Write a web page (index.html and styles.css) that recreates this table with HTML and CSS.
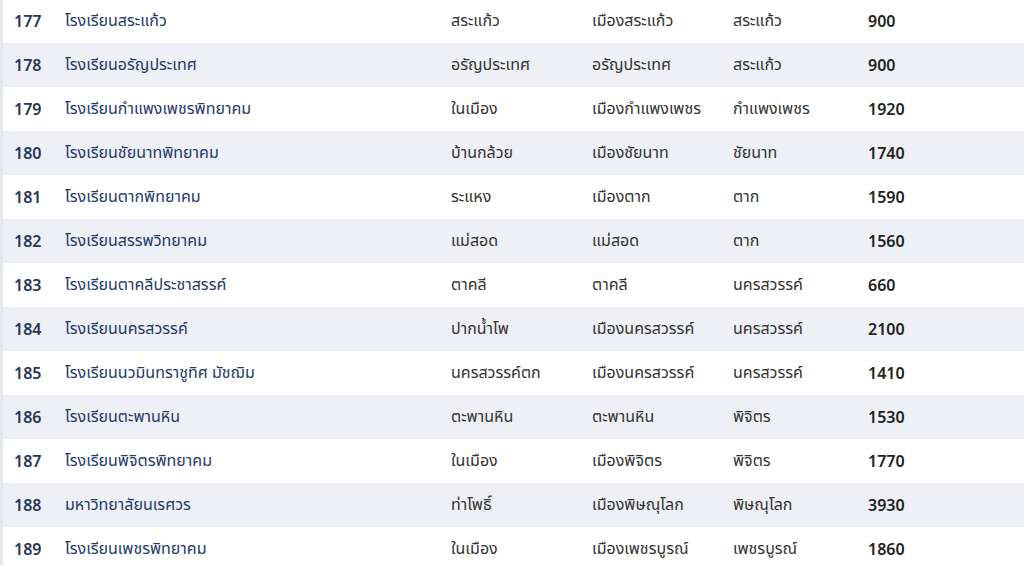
FILE: index.html
```html
<!DOCTYPE html>
<html lang="th">
<head>
<meta charset="utf-8">
<link rel="stylesheet" href="styles.css">
</head>
<body>
<div class="wrap">
<table class="schools">
<tbody>
<tr><td class="no">177</td><td class="name">โรงเรียนสระแก้ว</td><td class="c1">สระแก้ว</td><td class="c2">เมืองสระแก้ว</td><td class="c3">สระแก้ว</td><td class="val">900</td></tr>
<tr><td class="no">178</td><td class="name">โรงเรียนอรัญประเทศ</td><td class="c1">อรัญประเทศ</td><td class="c2">อรัญประเทศ</td><td class="c3">สระแก้ว</td><td class="val">900</td></tr>
<tr><td class="no">179</td><td class="name">โรงเรียนกำแพงเพชรพิทยาคม</td><td class="c1">ในเมือง</td><td class="c2">เมืองกำแพงเพชร</td><td class="c3">กำแพงเพชร</td><td class="val">1920</td></tr>
<tr><td class="no">180</td><td class="name">โรงเรียนชัยนาทพิทยาคม</td><td class="c1">บ้านกล้วย</td><td class="c2">เมืองชัยนาท</td><td class="c3">ชัยนาท</td><td class="val">1740</td></tr>
<tr><td class="no">181</td><td class="name">โรงเรียนตากพิทยาคม</td><td class="c1">ระแหง</td><td class="c2">เมืองตาก</td><td class="c3">ตาก</td><td class="val">1590</td></tr>
<tr><td class="no">182</td><td class="name">โรงเรียนสรรพวิทยาคม</td><td class="c1">แม่สอด</td><td class="c2">แม่สอด</td><td class="c3">ตาก</td><td class="val">1560</td></tr>
<tr><td class="no">183</td><td class="name">โรงเรียนตาคลีประชาสรรค์</td><td class="c1">ตาคลี</td><td class="c2">ตาคลี</td><td class="c3">นครสวรรค์</td><td class="val">660</td></tr>
<tr><td class="no">184</td><td class="name">โรงเรียนนครสวรรค์</td><td class="c1">ปากน้ำโพ</td><td class="c2">เมืองนครสวรรค์</td><td class="c3">นครสวรรค์</td><td class="val">2100</td></tr>
<tr><td class="no">185</td><td class="name">โรงเรียนนวมินทราชูทิศ มัชฌิม</td><td class="c1">นครสวรรค์ตก</td><td class="c2">เมืองนครสวรรค์</td><td class="c3">นครสวรรค์</td><td class="val">1410</td></tr>
<tr><td class="no">186</td><td class="name">โรงเรียนตะพานหิน</td><td class="c1">ตะพานหิน</td><td class="c2">ตะพานหิน</td><td class="c3">พิจิตร</td><td class="val">1530</td></tr>
<tr><td class="no">187</td><td class="name">โรงเรียนพิจิตรพิทยาคม</td><td class="c1">ในเมือง</td><td class="c2">เมืองพิจิตร</td><td class="c3">พิจิตร</td><td class="val">1770</td></tr>
<tr><td class="no">188</td><td class="name">มหาวิทยาลัยนเรศวร</td><td class="c1">ท่าโพธิ์</td><td class="c2">เมืองพิษณุโลก</td><td class="c3">พิษณุโลก</td><td class="val">3930</td></tr>
<tr><td class="no">189</td><td class="name">โรงเรียนเพชรพิทยาคม</td><td class="c1">ในเมือง</td><td class="c2">เมืองเพชรบูรณ์</td><td class="c3">เพชรบูรณ์</td><td class="val">1860</td></tr>
</tbody>
</table>
</div>
</body>
</html>
```

FILE: styles.css
```css
html, body {
  margin: 0;
  padding: 0;
  background: #ffffff;
  overflow: hidden;
}
.wrap {
  border-left: 3px solid #e4e8ef;
  margin-top: -1px;
}
.schools {
  width: 100%;
  border-collapse: collapse;
  table-layout: fixed;
  font-family: "Noto Sans", "Noto Sans Thai", "Noto Sans Thai UI", sans-serif;
  font-size: 16px;
  color: #333;
}
.schools tr {
  height: 44px;
}
.schools tr:nth-child(even) {
  background: #eef0f5;
}
.schools td {
  padding: 0;
  vertical-align: middle;
  white-space: nowrap;
}
.no {
  width: 62px;
  padding-left: 11px !important;
  box-sizing: border-box;
  font-weight: 600;
  color: #253656;
}
.name {
  width: 386px;
  color: #1f3a6b;
}
.c1 { width: 141px; }
.c2 { width: 141px; }
.c3 { width: 135px; }
.val {
  font-weight: 600;
  color: #222;
}
```
